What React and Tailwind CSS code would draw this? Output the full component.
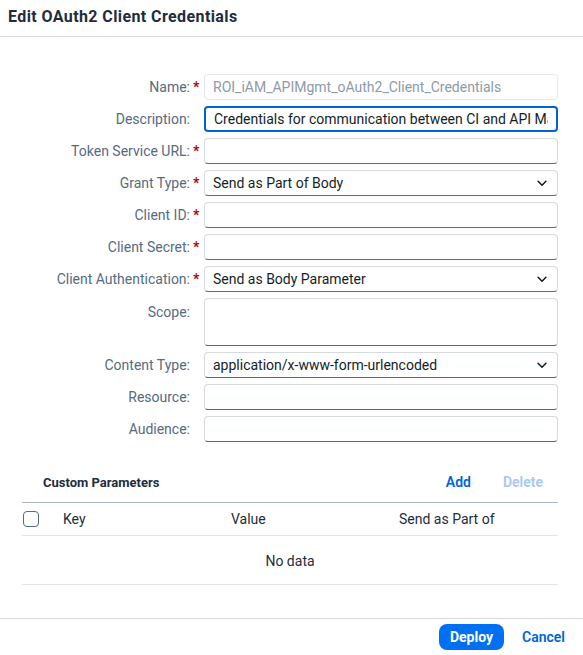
import React from 'react';

// Edit dialog for OAuth2 client credentials, laid out as a label/field grid.
const FONT = { fontFamily: 'Roboto, "Noto Sans", Arial, sans-serif' };

function Chevron() {
  return (
    <svg viewBox="0 0 16 16" className="h-[14px] w-[14px] text-[#131e29]" fill="none" stroke="currentColor" strokeWidth="1.8">
      <path d="M3.5 6l4.5 4.5L12.5 6" strokeLinecap="round" strokeLinejoin="round" />
    </svg>
  );
}

function Label({ text, required, top }) {
  return (
    <div className={`flex justify-end pr-[4px] text-[14px] text-[#556b82] ${top ? 'items-start pt-[4px]' : 'items-center'}`}>
      <span>{text}</span>
      <span className="ml-[3px] w-[7px] text-[#aa0808] font-bold leading-none">{required ? '*' : ''}</span>
    </div>
  );
}

function Field({ value = '', disabled, focused, select, tall }) {
  const base = 'flex items-center rounded-[4px] bg-white px-[8px] text-[14px] text-[#131e29]';
  let border = 'border border-[#d5dadd] border-b-[#556b82]';
  if (focused) border = 'border-2 border-[#0064d9] px-[7px]';
  if (disabled) border = 'border border-[#e5e8eb] text-[#8396a8]';
  return (
    <div className={`${base} ${border} ${tall ? 'h-[48px]' : 'h-[26px]'} overflow-hidden whitespace-nowrap`}>
      <span className={`flex-1 overflow-hidden ${disabled ? 'text-[#8d9aa7]' : ''}`}>{value}</span>
      {select && <Chevron />}
    </div>
  );
}

const ROWS = [
  { label: 'Name:', required: true, value: 'ROI_iAM_APIMgmt_oAuth2_Client_Credentials', disabled: true },
  { label: 'Description:', value: 'Credentials for communication between CI and API Management', focused: true },
  { label: 'Token Service URL:', required: true },
  { label: 'Grant Type:', required: true, value: 'Send as Part of Body', select: true },
  { label: 'Client ID:', required: true },
  { label: 'Client Secret:', required: true },
  { label: 'Client Authentication:', required: true, value: 'Send as Body Parameter', select: true },
  { label: 'Scope:', tall: true },
  { label: 'Content Type:', value: 'application/x-www-form-urlencoded', select: true },
  { label: 'Resource:' },
  { label: 'Audience:' },
];

export default function App() {
  return (
    <div className="flex h-[655px] w-[583px] flex-col bg-white" style={FONT}>
      <div className="flex h-[37px] items-center border-b border-[#d9d9d9] px-[8px] pb-[2px]">
        <h1 className="text-[16px] font-bold tracking-[0.4px] text-[#1d2d3e]">Edit OAuth2 Client Credentials</h1>
      </div>

      <div className="flex-1 pr-[25px] pt-[37px]">
        <div className="grid grid-cols-[204px_1fr] gap-y-[6px]">
          {ROWS.map((r) => (
            <React.Fragment key={r.label}>
              <Label text={r.label} required={r.required} top={r.tall} />
              <Field {...r} />
            </React.Fragment>
          ))}
        </div>

        <div className="ml-[22px] mt-[21px]">
          <div className="flex h-[40px] items-center border-b border-[#a9b4be] pl-[21px] pr-[15px]">
            <span className="flex-1 text-[13px] font-bold text-[#1d2d3e]">Custom Parameters</span>
            <span className="text-[14px] font-semibold text-[#0064d9]">Add</span>
            <span className="ml-[32px] text-[14px] font-semibold text-[#a6c8f1]">Delete</span>
          </div>
          <div className="flex h-[33px] items-center border-b border-[#e5e5e5] text-[14px] text-[#1d2d3e]">
            <span className="ml-[1px] h-[16px] w-[16px] rounded-[4px] border border-[#556b82]" />
            <span className="ml-[24px] w-[168px]">Key</span>
            <span className="w-[168px]">Value</span>
            <span>Send as Part of</span>
          </div>
          <div className="flex h-[49px] items-center justify-center border-b border-[#e5e5e5] pt-[3px] text-[14px] text-[#1d2d3e]">
            No data
          </div>
        </div>
      </div>

      <div className="flex h-[37px] items-center justify-end border-t border-[#d9d9d9] pr-[18px]">
        <button className="h-[26px] rounded-[8px] bg-[#0070f2] px-[11px] text-[14px] font-bold text-white">Deploy</button>
        <button className="ml-[18px] text-[14px] font-semibold text-[#0064d9]">Cancel</button>
      </div>
    </div>
  );
}
